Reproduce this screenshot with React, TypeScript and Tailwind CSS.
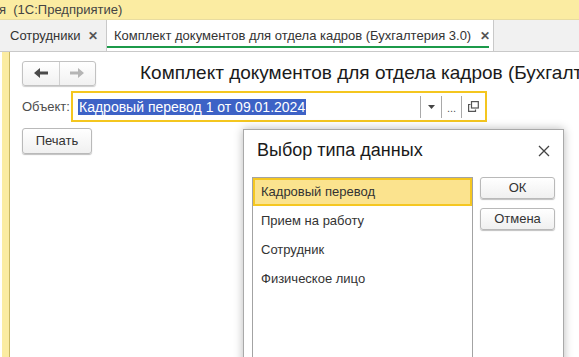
import React from "react";

const font = { fontFamily: '"Liberation Sans", Arial, sans-serif' };

function Btn({ children, className = "" }: { children: React.ReactNode; className?: string }) {
  return (
    <div
      className={`flex items-center justify-center rounded-[3px] border border-[#b9b9b9] bg-gradient-to-b from-white to-[#f0f0f0] text-[13px] text-[#333] shadow-[0_1px_1px_rgba(0,0,0,0.25)] ${className}`}
    >
      {children}
    </div>
  );
}

export default function App() {
  const items = ["Кадровый перевод", "Прием на работу", "Сотрудник", "Физическое лицо"];
  return (
    <div className="relative w-[579px] h-[357px] overflow-hidden bg-white" style={font}>
      {/* top bar */}
      <div className="h-[20px] bg-[#fbeca2] text-[13px] leading-[20px] text-[#444] whitespace-pre -ml-[1px] border-b border-[#e8dca0]">
        я  (1С:Предприятие)
      </div>
      {/* tab bar */}
      <div className="flex h-[32px] bg-[#f1f1f1] border-b border-[#c9c9c9]">
        <div className="flex shrink-0 items-center w-[107px] pl-[10px] border-r border-[#c9c9c9] text-[13px] text-[#333]">
          <span>Сотрудники</span>
          <span className="ml-[8px] text-[12px] font-bold text-[#555]">✕</span>
        </div>
        <div className="relative flex shrink-0 items-center w-[387px] pl-[7px] bg-white border-r border-[#c9c9c9] text-[13px] text-[#333]">
          <span>Комплект документов для отдела кадров (Бухгалтерия 3.0)</span>
          <span className="ml-[9px] text-[12px] font-bold text-[#555]">✕</span>
          <div className="absolute left-0 right-[4px] bottom-[3px] h-[2px] bg-[#1c9a4a]" />
        </div>
      </div>
      {/* body */}
      <div className="flex h-[305px]">
        <div className="w-[2px] shrink-0" />
        <div className="w-[8px] shrink-0 bg-[#fbeca2] border-r border-[#c9b865]" />
        <div className="flex-1 min-w-0 overflow-hidden flex flex-col pl-[12px] pt-[8px]">
          <div className="flex items-center h-[26px]">
            <div className="flex shrink-0 h-[25px] w-[74px] rounded-[3px] border border-[#c2c2c2] bg-gradient-to-b from-white to-[#f1f1f1] shadow-[0_1px_1px_rgba(0,0,0,0.2)]">
              <div className="flex flex-1 items-center justify-center border-r border-[#d0d0d0]">
                <svg width="16" height="12" viewBox="0 0 16 12">
                  <path d="M1 6 L7 1 L7 4.5 L15 4.5 L15 7.5 L7 7.5 L7 11 Z" fill="#4a4a4a" />
                </svg>
              </div>
              <div className="flex flex-1 items-center justify-center">
                <svg width="16" height="12" viewBox="0 0 16 12">
                  <path d="M15 6 L9 1 L9 4.5 L1 4.5 L1 7.5 L9 7.5 L9 11 Z" fill="#b5b5b5" />
                </svg>
              </div>
            </div>
            <div className="ml-[44px] whitespace-nowrap text-[19px] text-[#1a1a1a] leading-[26px]">
              Комплект документов для отдела кадров (Бухгалтерия 3.0)
            </div>
          </div>
          <div className="flex items-center mt-[5px] h-[31px]">
            <span className="shrink-0 text-[13px] text-[#4d4d4d] w-[49px]">Объект:</span>
            <div className="flex shrink-0 items-center h-[31px] w-[416px] border-2 border-[#f4c61f] bg-white">
              <div className="flex-1 pl-[5px]">
                <span className="bg-[#3d62c6] text-white text-[14px] leading-[18px] px-[1px]">
                  Кадровый перевод 1 от 09.01.2024
                </span>
              </div>
              <div className="flex h-[22px] items-center">
                <div className="w-[21px] h-full flex items-center justify-center border-l border-[#a9a9a9]">
                  <svg width="7" height="4" viewBox="0 0 7 4"><path d="M0 0 H7 L3.5 4 Z" fill="#444" /></svg>
                </div>
                <div className="w-[20px] h-full flex items-center justify-center border-l border-[#a9a9a9] text-[11px] text-[#555] pt-[4px]">
                  ...
                </div>
                <div className="w-[24px] h-full flex items-center justify-center border-l border-[#a9a9a9]">
                  <svg width="11" height="11" viewBox="0 0 11 11" fill="none" stroke="#555" strokeWidth="1.2">
                    <rect x="3.5" y="0.6" width="6.8" height="6.4" />
                    <path d="M2.5 3.5 H0.6 V10.4 H7.5 V8.5" />
                  </svg>
                </div>
              </div>
            </div>
          </div>
          <div className="mt-[6px]">
            <Btn className="w-[70px] h-[26px]">Печать</Btn>
          </div>
        </div>
      </div>

      {/* dialog */}
      <div className="absolute left-[243px] top-[129px] w-[321px] h-[240px] bg-white border border-[#a9a9a9] shadow-[0_0_9px_rgba(0,0,0,0.28)]">
        <div className="flex items-center justify-between h-[41px] pl-[13px] pr-[13px]">
          <span className="text-[18px] text-[#1a1a1a]">Выбор типа данных</span>
          <svg width="12" height="12" viewBox="0 0 12 12" stroke="#444" strokeWidth="1.3">
            <path d="M1 1 L11 11 M11 1 L1 11" />
          </svg>
        </div>
        <div className="flex pl-[8px] pt-[6px]">
          <div className="w-[221px] h-[200px] border border-[#a3a3a3]">
            {items.map((t, i) => (
              <div
                key={t}
                className={
                  i === 0
                    ? "h-[28px] flex items-center pl-[6px] bg-[#fbe38e] border-2 border-[#f5c721] text-[13px] text-[#333]"
                    : "h-[29px] flex items-center pl-[8px] text-[13px] text-[#333]"
                }
              >
                {t}
              </div>
            ))}
          </div>
          <div className="flex flex-col gap-[9px] ml-[7px]">
            <Btn className="w-[75px] h-[22px]">ОК</Btn>
            <Btn className="w-[75px] h-[22px]">Отмена</Btn>
          </div>
        </div>
      </div>
    </div>
  );
}
